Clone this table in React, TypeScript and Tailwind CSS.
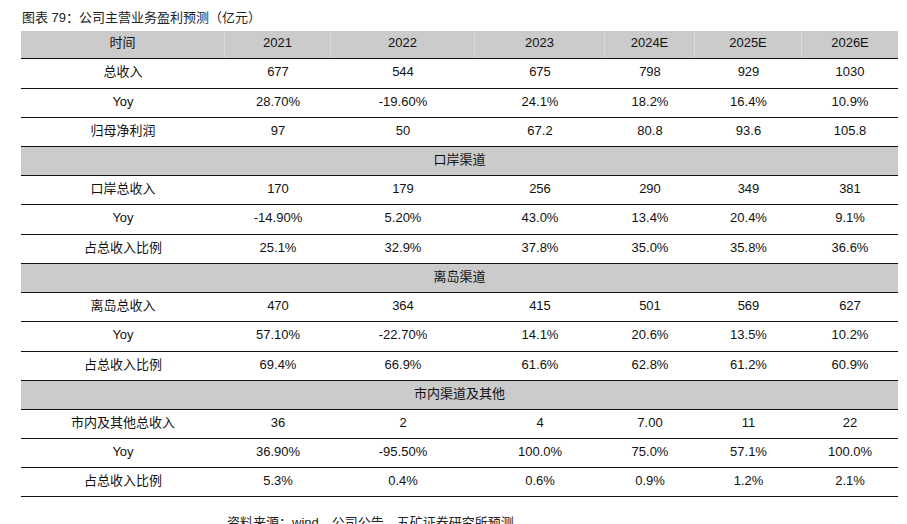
import React from "react";

type Row =
  | { kind: "data"; cells: string[]; h: number }
  | { kind: "section"; title: string; h: number };

const rows: Row[] = [
  { kind: "data", cells: ["总收入", "677", "544", "675", "798", "929", "1030"], h: 30 },
  { kind: "data", cells: ["Yoy", "28.70%", "-19.60%", "24.1%", "18.2%", "16.4%", "10.9%"], h: 29 },
  { kind: "data", cells: ["归母净利润", "97", "50", "67.2", "80.8", "93.6", "105.8"], h: 29 },
  { kind: "section", title: "口岸渠道", h: 29 },
  { kind: "data", cells: ["口岸总收入", "170", "179", "256", "290", "349", "381"], h: 29 },
  { kind: "data", cells: ["Yoy", "-14.90%", "5.20%", "43.0%", "13.4%", "20.4%", "9.1%"], h: 30 },
  { kind: "data", cells: ["占总收入比例", "25.1%", "32.9%", "37.8%", "35.0%", "35.8%", "36.6%"], h: 29 },
  { kind: "section", title: "离岛渠道", h: 29 },
  { kind: "data", cells: ["离岛总收入", "470", "364", "415", "501", "569", "627"], h: 29 },
  { kind: "data", cells: ["Yoy", "57.10%", "-22.70%", "14.1%", "20.6%", "13.5%", "10.2%"], h: 30 },
  { kind: "data", cells: ["占总收入比例", "69.4%", "66.9%", "61.6%", "62.8%", "61.2%", "60.9%"], h: 29 },
  { kind: "section", title: "市内渠道及其他", h: 29 },
  { kind: "data", cells: ["市内及其他总收入", "36", "2", "4", "7.00", "11", "22"], h: 29 },
  { kind: "data", cells: ["Yoy", "36.90%", "-95.50%", "100.0%", "75.0%", "57.1%", "100.0%"], h: 29 },
  { kind: "data", cells: ["占总收入比例", "5.3%", "0.4%", "0.6%", "0.9%", "1.2%", "2.1%"], h: 29 },
];

const header = ["时间", "2021", "2022", "2023", "2024E", "2025E", "2026E"];

const grid = "grid grid-cols-[204px_106px_144px_130px_90px_107px_96px]";

export default function App() {
  return (
    <div
      className="w-[907px] min-h-[540px] bg-white text-[#111] text-[13px]"
      style={{ fontFamily: '"Liberation Sans", "Noto Sans CJK SC", sans-serif' }}
    >
      <div className="pt-[8px] pl-[22px] h-[31px] leading-[20px] text-[13px] text-[#222]">
        图表 79：公司主营业务盈利预测（亿元）
      </div>
      <div className="ml-[21px] w-[877px]">
        <div className={`${grid} h-[28px] bg-[#cbcbcb] border-b border-[#111]`}>
          {header.map((c, i) => (
            <div
              key={i}
              className={`flex items-center justify-center pb-[3px] ${i < 6 ? "border-r border-[#dadada]" : ""}`}
            >
              {c}
            </div>
          ))}
        </div>
        {rows.map((r, idx) =>
          r.kind === "section" ? (
            <div
              key={idx}
              className="flex items-center justify-center bg-[#cbcbcb] border-b border-[#111] pb-[3px]"
              style={{ height: r.h }}
            >
              {r.title}
            </div>
          ) : (
            <div key={idx} className={`${grid} border-b border-[#111]`} style={{ height: r.h }}>
              {r.cells.map((c, i) => (
                <div key={i} className="flex items-center justify-center pb-[3px]">
                  {c}
                </div>
              ))}
            </div>
          )
        )}
      </div>
      <div className="mt-[16px] pl-[227px] leading-[20px] text-[13px] text-[#222]">
        资料来源：wind，公司公告，五矿证券研究所预测
      </div>
    </div>
  );
}
